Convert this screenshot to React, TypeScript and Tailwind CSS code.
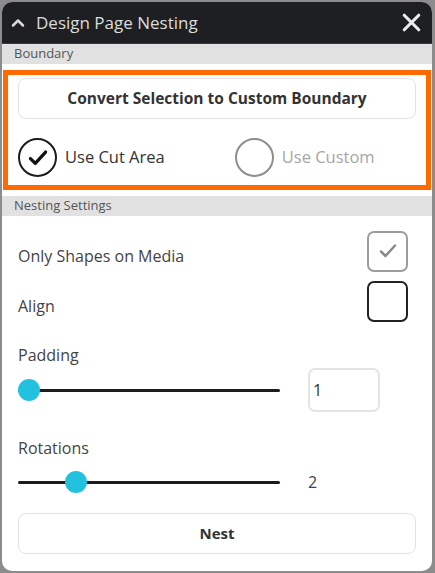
import { FiChevronUp, FiX } from "react-icons/fi";

const font = { fontFamily: '"Open Sans", "Noto Sans", sans-serif' };

const Check = ({ className }: { className: string }) => (
  <svg viewBox="0 0 24 24" className={className} fill="none" strokeLinecap="round" strokeLinejoin="round">
    <path d="M5 12.5l4.5 4.5L19 6.5" />
  </svg>
);

const Slider = ({ pos }: { pos: number }) => (
  <div className="relative w-[262px] h-[3px] bg-[#1c1c1c] rounded-full">
    <div
      className="absolute top-1/2 w-[22px] h-[22px] -translate-x-1/2 -translate-y-1/2 rounded-full bg-[#22c1de]"
      style={{ left: pos }}
    />
  </div>
);

const SectionHeader = ({ title }: { title: string }) => (
  <div className="bg-[#e1e1e1] pl-[12px] text-[13px] text-[#555] flex items-center">{title}</div>
);

export default function App() {
  return (
    <div className="w-[435px] h-[573px] bg-[#8c8c8c] pt-[2px] pl-[2px] pr-[3px]" style={font}>
      <div className="h-[569px] bg-white rounded-[10px] overflow-hidden flex flex-col">
        {/* Title bar */}
        <div className="h-[42px] bg-[#1e1f22] flex items-center pl-[6px] pr-[6px] border-b border-[#3a3a3a] shrink-0">
          <FiChevronUp className="text-[#d8d8d8] text-[20px]" strokeWidth={3} />
          <span className="ml-[8px] text-[17px] text-[#dcdcdc]">Design Page Nesting</span>
          <FiX className="ml-auto text-[#ececec] text-[29px]" strokeWidth={2.6} />
        </div>

        <div className="h-[24px] flex flex-col shrink-0">
          <SectionHeader title="Boundary" />
        </div>

        {/* Boundary box */}
        <div className="mt-[2px] mx-[1px] h-[120px] border-[5px] border-[#ff6a00] px-[10px] pt-[3px] flex flex-col shrink-0">
          <button className="h-[41px] w-full rounded-[8px] border border-[#e2e2e2] bg-white text-[15.5px] font-bold text-[#333]">
            Convert Selection to Custom Boundary
          </button>
          <div className="mt-[19px] flex items-center">
            <div className="w-[39px] h-[39px] rounded-full border-[2.5px] border-[#1c1c1c] flex items-center justify-center">
              <Check className="w-[26px] h-[26px] stroke-[#111] [stroke-width:3]" />
            </div>
            <span className="ml-[8px] text-[16.5px] text-[#333]">Use Cut Area</span>
            <div className="ml-[70px] w-[39px] h-[39px] rounded-full border-2 border-[#8e8e8e]" />
            <span className="ml-[8px] text-[16.5px] text-[#a6a6a6]">Use Custom</span>
          </div>
        </div>

        <div className="mt-[6px] h-[26px] flex flex-col shrink-0">
          <SectionHeader title="Nesting Settings" />
        </div>

        {/* Settings */}
        <div className="px-[16px] flex flex-col">
          <div className="mt-[9px] h-[40px] flex items-center justify-between">
            <span className="mt-[10px] text-[16px] text-[#444]">Only Shapes on Media</span>
            <div className="mr-[8px] w-[41px] h-[41px] rounded-[7px] border-2 border-[#9c9c9c] flex items-center justify-center">
              <Check className="w-[24px] h-[24px] stroke-[#8a8a8a] [stroke-width:2.5]" />
            </div>
          </div>
          <div className="mt-[10px] h-[40px] flex items-center justify-between">
            <span className="mt-[10px] text-[16px] text-[#444]">Align</span>
            <div className="mr-[8px] w-[41px] h-[41px] rounded-[7px] border-2 border-[#222]" />
          </div>

          <div className="mt-[23px] h-[22px] leading-[22px] text-[16px] text-[#444]">Padding</div>
          <div className="mt-[2px] h-[44px] flex items-center">
            <Slider pos={11} />
            <div className="ml-[28px] w-[72px] h-[44px] rounded-[7px] border-2 border-[#e4e4e4] flex items-center pl-[3px] text-[16px] text-[#333]">
              1
            </div>
          </div>

          <div className="mt-[25px] h-[22px] leading-[22px] text-[16px] text-[#444]">Rotations</div>
          <div className="mt-[1px] h-[44px] flex items-center">
            <Slider pos={58} />
            <span className="ml-[28px] text-[16px] text-[#444]">2</span>
          </div>

          <button className="mt-[9px] h-[41px] w-full rounded-[8px] border border-[#e2e2e2] bg-white text-[15px] font-bold text-[#333]">
            Nest
          </button>
        </div>
      </div>
    </div>
  );
}
